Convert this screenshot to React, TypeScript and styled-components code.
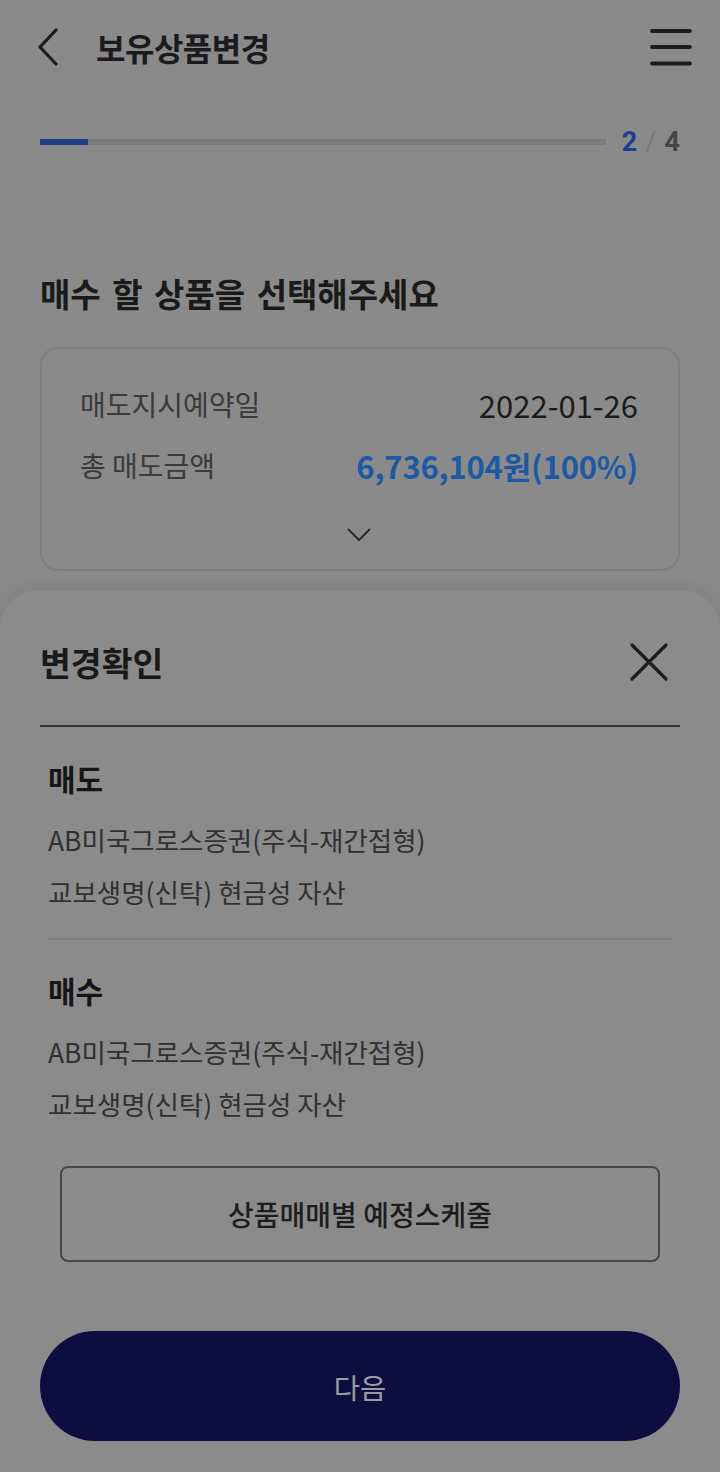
import React from "react";
import styled, { createGlobalStyle } from "styled-components";

const GlobalStyle = createGlobalStyle`
  html, body { margin: 0; padding: 0; background: #8a8a8a; }
  body { font-family: "Noto Sans CJK KR", "Noto Sans", sans-serif; }
  * { box-sizing: border-box; }
`;

const Page = styled.div`
  width: 720px;
  min-height: 1472px;
  display: flex;
  flex-direction: column;
  background: #8a8a8a;
  color: #1b1b1b;
`;

const Header = styled.header`
  height: 94px;
  display: flex;
  align-items: center;
  padding: 0 28px 0 36px;
`;

const IconButton = styled.button`
  background: none;
  border: 0;
  padding: 0;
  display: flex;
  align-items: center;
  justify-content: center;
  cursor: pointer;
`;

const Title = styled.h1`
  margin: 0 0 0 34px;
  flex: 1;
  font-size: 32px;
  font-weight: 700;
  letter-spacing: -0.5px;
  line-height: 40px;
  color: #1b1b1d;
`;

const ProgressRow = styled.div`
  margin-top: 34px;
  height: 28px;
  display: flex;
  align-items: center;
  padding: 0 40px;
  gap: 16px;
`;

const Track = styled.div`
  flex: 1;
  height: 6px;
  background: #7b7b7d;
`;

const Fill = styled.div`
  height: 100%;
  background: #213f84;
`;

const Steps = styled.div`
  font-size: 27px;
  font-weight: 700;
  line-height: 28px;
  display: flex;
  gap: 8px;
  font-family: "Roboto", "Noto Sans", sans-serif;
`;

const Step = styled.span<{ $tone: "active" | "sep" | "total" }>`
  color: ${(p) =>
    p.$tone === "active" ? "#1e3f8c" : p.$tone === "sep" ? "#7a7a7a" : "#444446"};
  font-weight: ${(p) => (p.$tone === "sep" ? 400 : 700)};
`;

const Heading = styled.h2`
  margin: 117px 0 0;
  padding: 0 40px;
  font-size: 33px;
  line-height: 40px;
  font-weight: 700;
  letter-spacing: 0;
  word-spacing: 4px;
  color: #1a1a1a;
`;

const Card = styled.section`
  margin: 34px 40px 0;
  height: 224px;
  border: 2px solid #7f7f80;
  border-radius: 18px;
  padding: 37px 40px 0 38px;
  display: flex;
  flex-direction: column;
`;

const InfoRow = styled.div<{ $gap?: number }>`
  height: 36px;
  display: flex;
  align-items: center;
  justify-content: space-between;
  margin-top: ${(p) => p.$gap ?? 0}px;
`;

const Label = styled.span`
  font-size: 28px;
  color: #3a3a3b;
`;

const Value = styled.span<{ $accent?: boolean }>`
  font-size: 31px;
  font-weight: ${(p) => (p.$accent ? 700 : 400)};
  letter-spacing: ${(p) => (p.$accent ? -0.2 : 0)}px;
  color: ${(p) => (p.$accent ? "#1d58a4" : "#1b1b1b")};
`;

const Expand = styled.div`
  margin-top: 40px;
  display: flex;
  justify-content: center;
  height: 24px;
  align-items: center;
`;

const Sheet = styled.section`
  margin-top: 19px;
  flex: 1;
  background: #8b8b8b;
  border-radius: 38px 38px 0 0;
  box-shadow: 0 -4px 14px rgba(0, 0, 0, 0.07);
  padding: 52px 40px 32px;
  display: flex;
  flex-direction: column;
`;

const SheetHeader = styled.div`
  height: 40px;
  display: flex;
  align-items: center;
  justify-content: space-between;
  padding-right: 12px;
`;

const SheetTitle = styled.h3`
  margin: 0;
  font-size: 33.5px;
  font-weight: 700;
  line-height: 40px;
  color: #19191a;
`;

const Rule = styled.hr<{ $strong?: boolean }>`
  border: 0;
  height: 2px;
  margin: ${(p) => (p.$strong ? "43px 0 0" : "28px 8px 0")};
  background: ${(p) => (p.$strong ? "#333334" : "#7c7c7d")};
`;

const Group = styled.div<{ $top: number }>`
  margin-top: ${(p) => p.$top}px;
  padding: 0 8px;
  display: flex;
  flex-direction: column;
`;

const GroupTitle = styled.h4`
  margin: 0 0 26px;
  font-size: 30px;
  line-height: 36px;
  font-weight: 700;
  color: #151516;
`;

const ItemList = styled.ul`
  list-style: none;
  margin: 0;
  padding: 0;
  display: flex;
  flex-direction: column;
  gap: 16px;
`;

const Item = styled.li`
  font-size: 26.5px;
  line-height: 36px;
  color: #303031;
`;

const OutlineButton = styled.button`
  margin: 44px 20px 0;
  height: 96px;
  border: 2px solid #474748;
  border-radius: 8px;
  background: transparent;
  font-family: inherit;
  font-size: 28px;
  font-weight: 500;
  color: #1d1d1e;
`;

const PrimaryButton = styled.button`
  margin-top: 69px;
  height: 110px;
  border: 0;
  border-radius: 55px;
  background: #0b0e3f;
  font-family: inherit;
  font-size: 28.5px;
  color: #9c9c9e;
`;

const items = ["AB미국그로스증권(주식-재간접형)", "교보생명(신탁) 현금성 자산"];

export default function App() {
  const progress = 48 / 568;
  return (
    <>
      <GlobalStyle />
      <Page>
        <Header>
          <IconButton aria-label="뒤로">
            <svg width="26" height="38" viewBox="0 0 26 38">
              <path d="M20 2 L4 19 L20 36" fill="none" stroke="#1c1c1e" strokeWidth="3.2" strokeLinecap="round" strokeLinejoin="round" />
            </svg>
          </IconButton>
          <Title>보유상품변경</Title>
          <IconButton aria-label="메뉴">
            <svg width="42" height="38" viewBox="0 0 42 38">
              <path d="M2 3 H40 M2 19 H40 M2 35.5 H40" stroke="#1c1c1e" strokeWidth="3.8" strokeLinecap="round" />
            </svg>
          </IconButton>
        </Header>

        <ProgressRow>
          <Track>
            <Fill style={{ width: `${progress * 100}%` }} />
          </Track>
          <Steps>
            <Step $tone="active">2</Step>
            <Step $tone="sep">/</Step>
            <Step $tone="total">4</Step>
          </Steps>
        </ProgressRow>

        <Heading>매수 할 상품을 선택해주세요</Heading>

        <Card>
          <InfoRow>
            <Label>매도지시예약일</Label>
            <Value>2022-01-26</Value>
          </InfoRow>
          <InfoRow $gap={25}>
            <Label>총 매도금액</Label>
            <Value $accent>6,736,104원(100%)</Value>
          </InfoRow>
          <Expand>
            <svg width="24" height="14" viewBox="0 0 24 14">
              <path d="M1.5 1.5 L12 12 L22.5 1.5" fill="none" stroke="#2a2a2c" strokeWidth="2" strokeLinecap="round" strokeLinejoin="round" />
            </svg>
          </Expand>
        </Card>

        <Sheet>
          <SheetHeader>
            <SheetTitle>변경확인</SheetTitle>
            <IconButton aria-label="닫기">
              <svg width="38" height="38" viewBox="0 0 38 38">
                <path d="M2 2 L36 36 M36 2 L2 36" stroke="#1c1c1e" strokeWidth="3.2" strokeLinecap="round" />
              </svg>
            </IconButton>
          </SheetHeader>
          <Rule $strong />

          <Group $top={33}>
            <GroupTitle>매도</GroupTitle>
            <ItemList>
              {items.map((t) => (
                <Item key={t}>{t}</Item>
              ))}
            </ItemList>
          </Group>

          <Rule />

          <Group $top={32}>
            <GroupTitle>매수</GroupTitle>
            <ItemList>
              {items.map((t) => (
                <Item key={t}>{t}</Item>
              ))}
            </ItemList>
          </Group>

          <OutlineButton>상품매매별 예정스케줄</OutlineButton>
          <PrimaryButton>다음</PrimaryButton>
        </Sheet>
      </Page>
    </>
  );
}
